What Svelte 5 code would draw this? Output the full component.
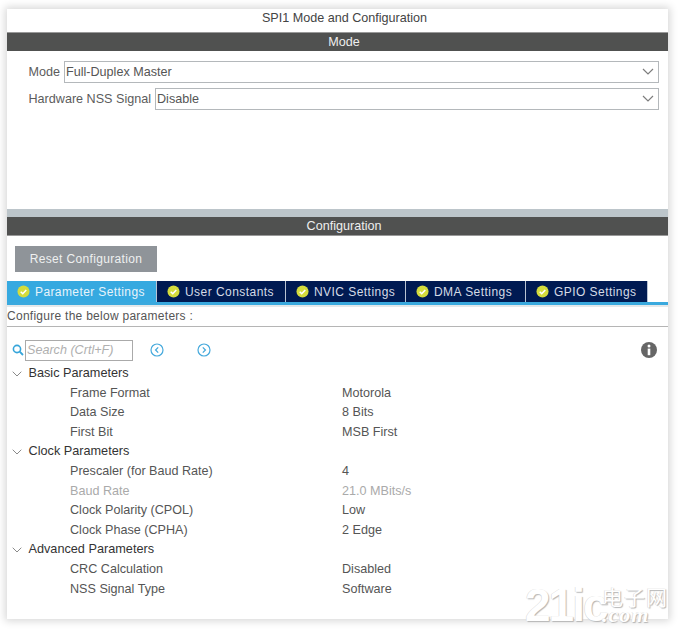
<script>
  const tabs = [
    { label: 'Parameter Settings', w: 150, active: true },
    { label: 'User Constants', w: 129 },
    { label: 'NVIC Settings', w: 120 },
    { label: 'DMA Settings', w: 120 },
    { label: 'GPIO Settings', w: 122 }
  ];
  const groups = [
    { name: 'Basic Parameters', items: [['Frame Format', 'Motorola'], ['Data Size', '8 Bits'], ['First Bit', 'MSB First']] },
    { name: 'Clock Parameters', items: [['Prescaler (for Baud Rate)', '4'], ['Baud Rate', '21.0 MBits/s', true], ['Clock Polarity (CPOL)', 'Low'], ['Clock Phase (CPHA)', '2 Edge']] },
    { name: 'Advanced Parameters', items: [['CRC Calculation', 'Disabled'], ['NSS Signal Type', 'Software']] }
  ];
</script>

<div class="page">
  <div class="panel">
    <div class="title">SPI1 Mode and Configuration</div>
    <div class="bar mode-bar">Mode</div>
    <div class="mode-body">
      <div class="field">
        <span class="flabel">Mode</span>
        <div class="select">Full-Duplex Master
          <svg class="chev" viewBox="0 0 12 7" width="12" height="7"><path d="M1 1l5 5 5-5" /></svg>
        </div>
      </div>
      <div class="field">
        <span class="flabel">Hardware NSS Signal</span>
        <div class="select">Disable
          <svg class="chev" viewBox="0 0 12 7" width="12" height="7"><path d="M1 1l5 5 5-5" /></svg>
        </div>
      </div>
    </div>
    <div class="strip"></div>
    <div class="bar conf-bar">Configuration</div>
    <button class="reset">Reset Configuration</button>
    <div class="tabs">
      {#each tabs as t}
        <div class="tab" class:active={t.active} style="width:{t.w}px">
          <svg viewBox="0 0 14 14" width="13" height="13">
            <circle cx="7" cy="7" r="6.5" fill="#d4dc3c" />
            <path d="M4 7.2l2.2 2.2L10 5.4" fill="none" stroke="#fff" stroke-width="1.7" />
          </svg>
          <span>{t.label}</span>
        </div>
      {/each}
    </div>
    <div class="hint">Configure the below parameters :</div>
    <div class="search-row">
      <svg class="mag" viewBox="0 0 12 12" width="12" height="12">
        <circle cx="5" cy="5" r="3.6" fill="none" stroke="#36a5da" stroke-width="1.6" />
        <path d="M7.7 7.7L11 11" stroke="#36a5da" stroke-width="1.8" />
      </svg>
      <div class="search">Search (Crtl+F)</div>
      <svg class="nav first" viewBox="0 0 14 14" width="14" height="14">
        <circle cx="7" cy="7" r="6" fill="none" stroke="#45a9dc" stroke-width="1.2" />
        <path d="M8.2 4.4L5.6 7l2.6 2.6" fill="none" stroke="#45a9dc" stroke-width="1.3" />
      </svg>
      <svg class="nav" viewBox="0 0 14 14" width="14" height="14">
        <circle cx="7" cy="7" r="6" fill="none" stroke="#45a9dc" stroke-width="1.2" />
        <path d="M5.8 4.4L8.4 7l-2.6 2.6" fill="none" stroke="#45a9dc" stroke-width="1.3" />
      </svg>
      <svg class="info" viewBox="0 0 16 16" width="16" height="16">
        <circle cx="8" cy="8" r="8" fill="#666" />
        <circle cx="8" cy="4" r="1.5" fill="#fff" />
        <rect x="6.7" y="6.6" width="2.6" height="6.6" fill="#fff" />
      </svg>
    </div>
    <div class="tree">
      {#each groups as g}
        <div class="group">
          <svg viewBox="0 0 10 6" width="10" height="6"><path d="M.7.7L5 5l4.3-4.3" /></svg>
          <span>{g.name}</span>
        </div>
        {#each g.items as it}
          <div class="row" class:dim={it[2]}>
            <span class="k">{it[0]}</span>
            <span>{it[1]}</span>
          </div>
        {/each}
      {/each}
    </div>
  </div>
  <div class="mark">
    <span class="big">21ic</span>
    <span class="side"><span class="cn">电子网</span><span class="com">.com</span></span>
  </div>
</div>

<style>
  :global(body) {
    margin: 0;
    background: #fff;
  }
  .page {
    position: relative;
    width: 680px;
    height: 631px;
    padding: 9px 0 0 7px;
    box-sizing: border-box;
    overflow: hidden;
    font-family: "Liberation Sans", Arial, sans-serif;
  }
  .panel {
    width: 661px;
    height: 610px;
    background: #fff;
    box-shadow: 0 0 8px 2px rgba(0, 0, 0, 0.16);
    color: #555;
    font-size: 12.6px;
    display: flex;
    flex-direction: column;
  }
  .title {
    height: 23px;
    line-height: 19px;
    padding-left: 14px;
    text-align: center;
    color: #444;
  }
  .bar {
    background: #505150;
    color: #eee;
    text-align: center;
    padding-left: 13px;
    box-sizing: border-box;
  }
  .mode-bar {
    height: 19px;
    line-height: 19px;
    border-top: 1px solid #999;
  }
  .mode-body {
    height: 158px;
    box-sizing: border-box;
    padding: 10px 9px 0 21.5px;
    display: flex;
    flex-direction: column;
    gap: 5px;
  }
  .field {
    display: flex;
    align-items: center;
    gap: 4px;
    height: 22px;
  }
  .flabel {
    white-space: nowrap;
    color: #5c5c5c;
  }
  .select {
    flex: 1;
    height: 22px;
    box-sizing: border-box;
    border: 1px solid #b4b8bb;
    padding-left: 1px;
    line-height: 21px;
    position: relative;
    color: #555;
  }
  .chev {
    position: absolute;
    right: 4px;
    top: 6px;
  }
  .chev path {
    fill: none;
    stroke: #7d7d7d;
    stroke-width: 1.2;
  }
  .strip {
    height: 8px;
    background: #bcc5ca;
  }
  .conf-bar {
    height: 19px;
    line-height: 18px;
    border-bottom: 1px solid #999;
  }
  .reset {
    align-self: flex-start;
    width: 142px;
    height: 26px;
    margin: 10px 0 9px 8px;
    padding: 0;
    border: none;
    background: #8f9499;
    color: #eef0f0;
    font: 12px "Liberation Sans", Arial, sans-serif;
    letter-spacing: 0.35px;
  }
  .tabs {
    display: flex;
    height: 21px;
    border-bottom: 3px solid #3aa9de;
    box-shadow: 0 2px 0 #e4e8ea;
    font-size: 12px;
  }
  .tab {
    box-sizing: border-box;
    height: 21px;
    background: #001a52;
    color: #d5dbe6;
    border-right: 1px solid #b9c3d3;
    display: flex;
    align-items: center;
    gap: 5px;
    padding-left: 10px;
    letter-spacing: 0.45px;
    white-space: nowrap;
  }
  .tab.active {
    background: #36a9e0;
    color: #e8f4fb;
    padding-left: 10px;
    letter-spacing: 0.4px;
  }
  .hint {
    height: 21px;
    line-height: 23px;
    border-bottom: 1px solid #b5b5b5;
    color: #555;
    font-size: 12px;
    letter-spacing: 0.27px;
  }
  .search-row {
    display: flex;
    align-items: center;
    height: 22px;
    margin-top: 12px;
    padding-left: 5px;
  }
  .mag {
    margin-right: 1px;
  }
  .search {
    box-sizing: border-box;
    width: 108px;
    height: 21px;
    border: 1px solid #aaa;
    padding-left: 1px;
    line-height: 19px;
    font-style: italic;
    color: #b0b0b0;
  }
  .nav {
    margin-left: 33px;
  }
  .nav.first {
    margin-left: 17px;
  }
  .info {
    margin-left: auto;
    margin-right: 11px;
  }
  .tree {
    margin-top: 3.1px;
  }
  .group,
  .row {
    height: 19.6px;
    line-height: 19.6px;
    display: flex;
    align-items: center;
    white-space: nowrap;
  }
  .group {
    padding-left: 5px;
    gap: 6.5px;
    color: #333;
    font-size: 12.7px;
  }
  .group path {
    fill: none;
    stroke: #8a8a8a;
    stroke-width: 1;
  }
  .row {
    padding-left: 63px;
    color: #555;
  }
  .row.dim {
    color: #aaa;
  }
  .k {
    width: 272px;
  }
  .mark {
    position: absolute;
    left: 525px;
    top: 584px;
    display: flex;
    gap: 6px;
    color: #fff;
    text-shadow: 1px 1px 1px #b5b5b5, -0.5px -0.5px 0 #d8d8d8;
    pointer-events: none;
  }
  .big {
    font: bold 46px/42px "Liberation Sans", sans-serif;
    display: block;
    width: 71px;
    letter-spacing: -2px;
    white-space: nowrap;
  }
  .side {
    display: flex;
    flex-direction: column;
    width: 70px;
    padding-top: 2px;
  }
  .cn {
    font: 21px/21px "Noto Sans CJK SC", sans-serif;
    letter-spacing: 1px;
    white-space: nowrap;
  }
  .com {
    font: italic bold 22px/16px "Liberation Serif", serif;
    letter-spacing: 1px;
    white-space: nowrap;
  }
</style>
